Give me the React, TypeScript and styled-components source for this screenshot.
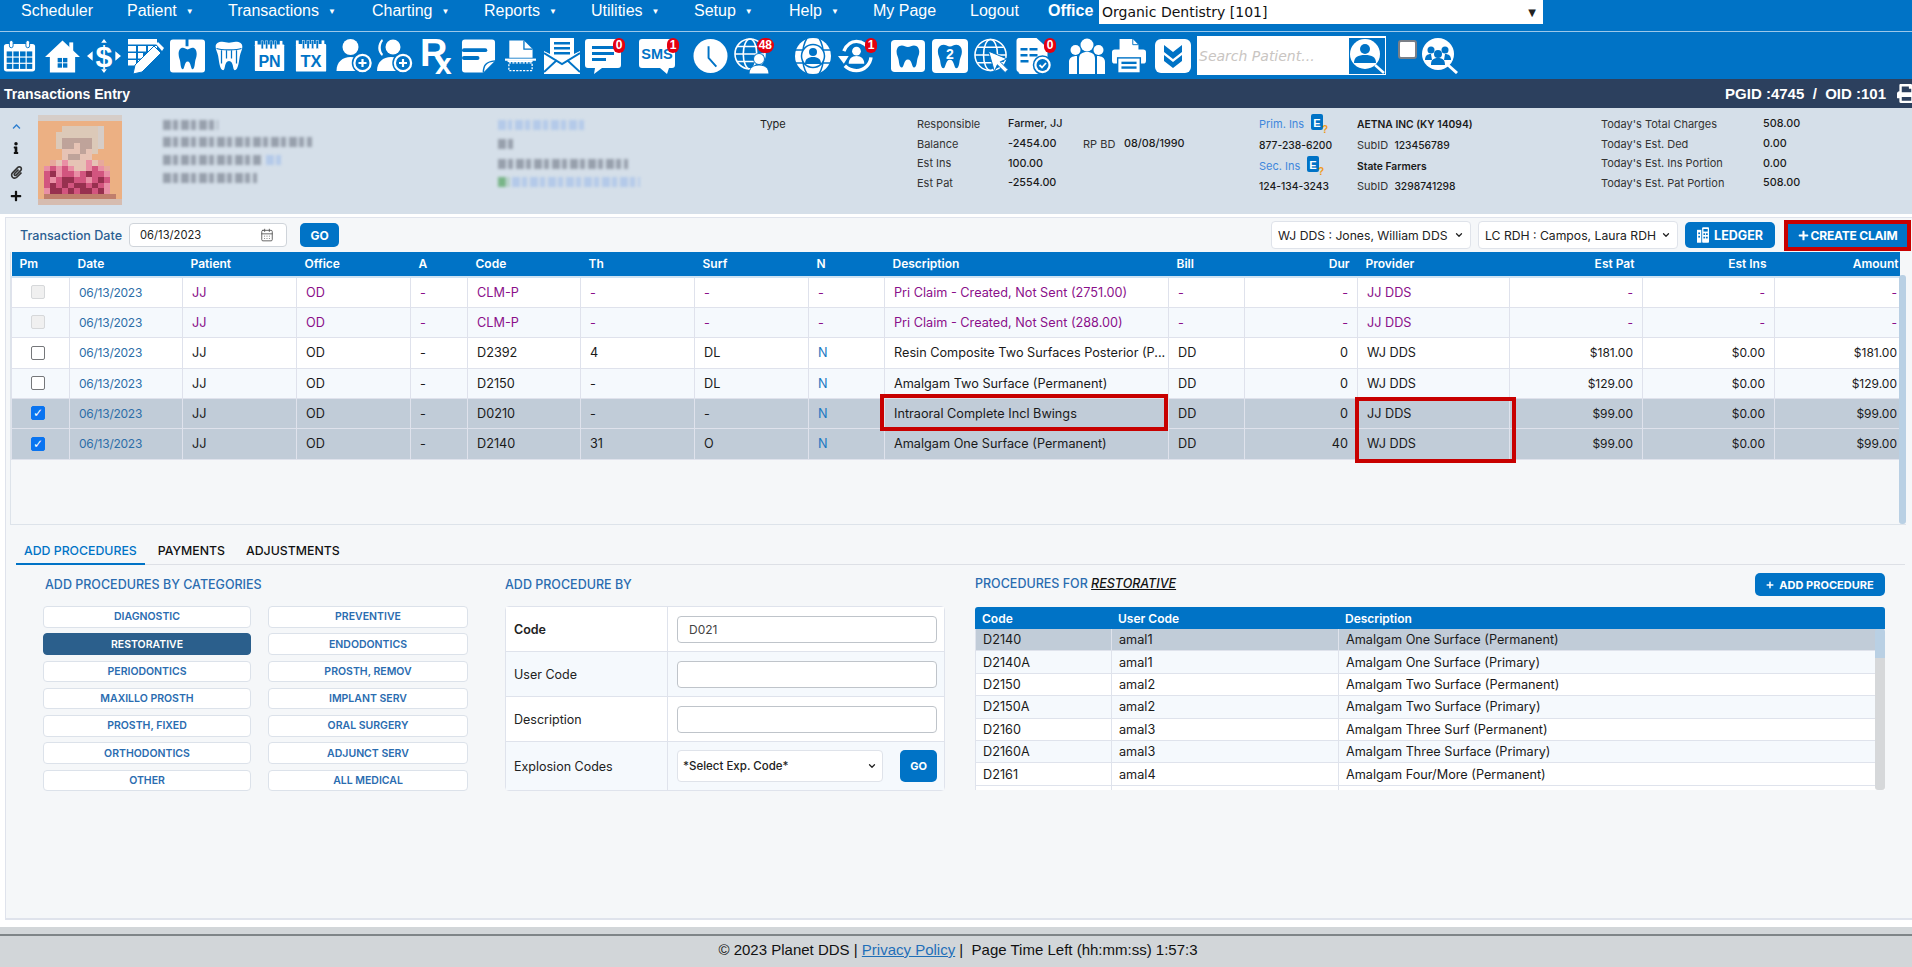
import React from "react";
import styled, { createGlobalStyle } from "styled-components";
import { FaChevronUp, FaInfo, FaPaperclip, FaPlus, FaPrint } from "react-icons/fa";
import { CalendarDays, ChevronDown } from "lucide-react";

const BLUE = "#0073c6";
const UI_FONT = `Inter, "Open Sans", sans-serif`;

const GlobalStyle = createGlobalStyle`
  html, body { margin: 0; padding: 0; background: #fff; }
  body { font-family: ${UI_FONT}; overflow: hidden; }
  * { box-sizing: border-box; }
`;

/* ---------- toolbar icons ---------- */

const Svg: React.FC<{ children: React.ReactNode }> = ({ children }) => (
  <svg viewBox="0 0 36 36" width="100%" height="36" fill="#fff">
    {children}
  </svg>
);

const TOOTH =
  "M18 6.5c-3 0-5-2-8-2C5.5 4.500 3 8 3 12.500c0 4.500 2.200 6.500 2.800 10.500.5 3.500 1.200 9 4 9 3.300 0 2.500-10 8.200-10s4.900 10 8.200 10c2.800 0 3.500-5.500 4-9 .6-4 2.800-6 2.800-10.500C33 8 30.500 4.500 26 4.500c-3 0-5 2-8 2z";

const Head = ({ x, y, r }: { x: number; y: number; r: number }) => <circle cx={x} cy={y} r={r} />;

const Calendar = () => (
  <Svg>
    <rect x="1" y="5" width="34" height="30" rx="3" />
    <rect x="7" y="1" width="4" height="8" rx="2" stroke={BLUE} />
    <rect x="25" y="1" width="4" height="8" rx="2" stroke={BLUE} />
    <g fill={BLUE}>
      {[0, 1, 2].map((r) =>
        [0, 1, 2, 3].map((c) => <rect key={`${r}${c}`} x={4 + c * 7.300} y={13 + r * 6.800} width="6" height="5.500" />)
      )}
    </g>
  </Svg>
);
const Home = () => (
  <Svg>
    <path d="M18 2 36 19h-5v16H5V19H0L18 2z" />
    <rect x="25" y="4" width="4" height="9" />
    <g fill={BLUE}>
      <rect x="13" y="20" width="4.500" height="4.500" />
      <rect x="18.500" y="20" width="4.500" height="4.500" />
      <rect x="13" y="25.500" width="4.500" height="4.500" />
      <rect x="18.500" y="25.500" width="4.500" height="4.500" />
    </g>
  </Svg>
);
const Dollar = () => (
  <Svg>
    <text x="18" y="29.500" fontSize="32" fontWeight="700" textAnchor="middle" fontFamily="Liberation Sans">$</text>
    <path d="M18 0l3 4h-6zM18 36l3-4h-6z" />
    <path d="M0 18l6-5v10zM36 18l-6-5v10z" />
  </Svg>
);
const ListPencil = () => (
  <Svg>
    {[1, 8, 15, 22].map((y, i) => (
      <g key={y}>
        <rect x="0" y={y} width={i === 0 ? 29 : 8} height="5.500" />
        {i > 0 && <rect x="10" y={y} width={i === 1 ? 8 : 5} height="5.500" />}
        {i === 1 && <rect x="20" y={y} width="9" height="5.500" />}
      </g>
    ))}
    <path d="M5 36l2-9L26 8l7 7-19 19-9 2z" stroke={BLUE} strokeWidth="1" />
    <path d="M28 6l2-2 6 6-2 3z" />
  </Svg>
);
const ToothTile = () => (
  <Svg>
    <rect x="0" y="1" width="36" height="34" rx="3" />
    <rect x="16" y="0" width="3" height="8" fill={BLUE} />
    <path transform="translate(7 6) scale(.62 .8)" d={TOOTH} fill={BLUE} />
  </Svg>
);
const Crown = () => (
  <Svg>
    <path d="M2 7c0-4 3-6 8-6 3 0 5 1 8 1s5-1 8-1c5 0 8 2 8 6 0 4-2 6-3 11-1 6-2 17-6 17-3 0-1-11-7-11s-4 11-7 11c-4 0-5-11-6-17-1-5-3-7-3-11z" />
    <g stroke={BLUE} strokeWidth="1.500">
      <path d="M9 11v16M15 11v10M21 11v10M27 11v16" fill="none" />
      <path d="M3 9c5 2 25 2 30 0" fill="none" />
    </g>
  </Svg>
);
const Pad = ({ label }: { label: string }) => (
  <Svg>
    <rect x="1" y="5" width="33" height="30" rx="1" />
    <g fill={BLUE}>
      {[8, 13, 18, 23].map((x) => (
        <rect key={x} x={x} y="1" width="2.500" height="9" stroke="#fff" strokeWidth=".5" />
      ))}
    </g>
    <rect x="1" y="1" width="3" height="6" />
    <rect x="29" y="1" width="3" height="6" />
    <text x="17.500" y="30" fontSize="18" fontWeight="700" textAnchor="middle" fill={BLUE} fontFamily="Liberation Sans">{label}</text>
  </Svg>
);
const PlusDisc = ({ cx = 26, cy = 25 }: { cx?: number; cy?: number }) => (
  <g>
    <circle cx={cx} cy={cy} r="10" stroke={BLUE} strokeWidth="1.500" />
    <circle cx={cx} cy={cy} r="7" fill={BLUE} />
    <path d={`M${cx - 4} ${cy}h8M${cx} ${cy - 4}v8`} stroke="#fff" strokeWidth="2.200" />
  </g>
);
const AddUser = () => (
  <Svg>
    <Head x={14} y={9} r={8} />
    <path d="M0 33c0-9 6-14 14-14s12 4 14 14z" />
    <PlusDisc />
  </Svg>
);
const AddUserAlt = () => (
  <Svg>
    <Head x={16} y={9} r={7.500} />
    <path d="M6 3C3 6 3 13 6 16l-1 2C0 14 0 6 5 1z" />
    <path d="M0 33c0-9 6-14 14-14s12 4 14 14z" />
    <PlusDisc />
  </Svg>
);
const Rx = () => (
  <svg viewBox="0 0 33 36" width="33" height="36" fill="#fff" overflow="visible">
    <text x="0" y="28" fontSize="38" fontWeight="700" fontFamily="Liberation Sans">R</text>
    <text x="15" y="36" fontSize="30" fontWeight="700" fontFamily="Liberation Sans">x</text>
  </svg>
);
const Note = () => (
  <Svg>
    <path d="M4 1h28c2 0 3 1 3 3v19L23 35H4c-2 0-3-1-3-3V4c0-2 1-3 3-3z" />
    <path d="M23 35c0-8 3-11 12-12" fill="none" stroke={BLUE} strokeWidth="1.500" />
    <rect x="1" y="10" width="26" height="4" rx="2" fill={BLUE} />
    <rect x="1" y="18" width="18" height="4" rx="2" fill={BLUE} />
  </Svg>
);
const FileScan = () => (
  <Svg>
    <path d="M5 0h17l10 10v10H5z" />
    <path d="M22 0v10h10" fill="none" stroke={BLUE} strokeWidth="1.500" />
    <rect x="0" y="21" width="36" height="2.500" />
    <rect x="3" y="23" width="29" height="2" />
    <rect x="4.500" y="26" width="27" height="9" fill="none" stroke="#fff" strokeWidth="1.500" strokeDasharray="2.500 1.500" />
  </Svg>
);
const Envelope = () => (
  <Svg>
    <path d="M6 0h24v16l6-3v23H0V13l6 3z" />
    <g fill={BLUE}>
      <rect x="10" y="4" width="16" height="2.500" />
      <rect x="10" y="9" width="16" height="2.500" />
      <rect x="10" y="14" width="16" height="2.500" />
    </g>
    <path d="M0 15l18 11 18-11M0 34l13-12M36 34 23 22" fill="none" stroke={BLUE} strokeWidth="2" />
  </Svg>
);
const Chat = () => (
  <Svg>
    <path d="M3 1h30c2 0 3 1 3 3v23c0 2-1 3-3 3H17L9 36l1-6H3c-2 0-3-1-3-3V4c0-2 1-3 3-3z" />
    <g fill={BLUE}>
      <rect x="7" y="8" width="22" height="3" />
      <rect x="7" y="14" width="22" height="3" />
      <rect x="7" y="20" width="14" height="3" />
    </g>
  </Svg>
);
const Sms = () => (
  <Svg>
    <path d="M3 1h30c2 0 3 1 3 3v23c0 2-1 3-3 3h-3l-2 6-7-6H3c-2 0-3-1-3-3V4c0-2 1-3 3-3z" />
    <text x="18" y="21" fontSize="14.500" fontWeight="700" textAnchor="middle" fill={BLUE} fontFamily="Liberation Sans">SMS</text>
  </Svg>
);
const Clock = () => (
  <Svg>
    <circle cx="18" cy="18" r="17.500" />
    <path d="M16 8v12l8 9" fill="none" stroke={BLUE} strokeWidth="2" />
  </Svg>
);
const GlobeLines = ({ r = 15, cx = 16, cy = 16 }: { r?: number; cx?: number; cy?: number }) => (
  <g fill="none" stroke="#fff" strokeWidth="1.600">
    <circle cx={cx} cy={cy} r={r} />
    <ellipse cx={cx} cy={cy} rx={r * 0.45} ry={r} />
    <path d={`M${cx - r} ${cy}h${2 * r}M${cx - r * 0.85} ${cy - r * 0.5}h${1.7 * r}M${cx - r * 0.85} ${cy + r * 0.5}h${1.7 * r}`} />
  </g>
);
const GlobeUser = () => (
  <Svg>
    <GlobeLines />
    <circle cx="25" cy="21" r="5.500" stroke={BLUE} />
    <path d="M15 36c0-6 4-9 10-9s10 3 10 9z" stroke={BLUE} />
  </Svg>
);
const GlobeBadgeUser = () => (
  <Svg>
    <circle cx="18" cy="18" r="18" />
    <path d="M0 12h36M0 25h36M12 0c-6 10-6 26 0 36M24 0c6 10 6 26 0 36" fill="none" stroke={BLUE} strokeWidth="1.500" />
    <circle cx="18" cy="18" r="11.500" stroke={BLUE} strokeWidth="1.500" />
    <circle cx="18" cy="14" r="4" fill={BLUE} />
    <path d="M10 26c0-5 3-7 8-7s8 2 8 7z" fill={BLUE} />
  </Svg>
);
const RefreshUser = () => (
  <Svg>
    <path d="M6 13C9 6 14 3 19 3c8 0 15 7 15 15s-7 15-15 15c-5 0-9-2-12-5" fill="none" stroke="#fff" strokeWidth="3.500" strokeDasharray="36 6" />
    <path d="M0 18h11l-5 8z" />
    <circle cx="19" cy="13" r="4.500" />
    <path d="M11 26c0-5 3-8 8-8s8 3 8 8z" />
  </Svg>
);
const ToothPlain = () => (
  <Svg>
    <rect x="0" y="1" width="36" height="34" rx="4" />
    <path transform="translate(3.500 3) scale(.8 .85)" d={TOOTH} fill={BLUE} />
  </Svg>
);
const ToothNumber = () => (
  <Svg>
    <rect x="0" y="1" width="36" height="34" rx="4" />
    <path transform="translate(3.500 3) scale(.8 .85)" d={TOOTH} fill={BLUE} />
    <text x="18" y="21" fontSize="14" fontWeight="700" textAnchor="middle" fontFamily="Liberation Sans">2</text>
  </Svg>
);
const GlobeCursor = () => (
  <Svg>
    <GlobeLines r={16} cx={17} cy={17} />
    <path d="M15 13l19 8-7 3 8 8-3 3-8-8-3 7z" stroke={BLUE} />
  </Svg>
);
const DocCheck = () => (
  <Svg>
    <path d="M3 0h18l11 10v14H3z" />
    <path d="M1 3c0-2 1-3 3-3h4v34H4c-2 0-3-1-3-3z" />
    <rect x="3" y="10" width="24" height="26" rx="2" />
    <g fill={BLUE}>
      <rect x="5" y="10" width="7" height="2.500" />
      <rect x="14" y="10" width="8" height="2.500" />
      <rect x="5" y="16" width="7" height="2.500" />
      <rect x="14" y="16" width="8" height="2.500" />
      <rect x="5" y="22" width="8" height="2.500" />
    </g>
    <circle cx="27" cy="27" r="9" stroke={BLUE} strokeWidth="1.500" />
    <circle cx="27" cy="27" r="6" fill={BLUE} />
    <path d="M24 27l2.500 2.500 4-4.500" fill="none" stroke="#fff" strokeWidth="1.800" />
  </Svg>
);
const People = () => (
  <Svg>
    <circle cx="18" cy="7" r="6.500" />
    <circle cx="6.500" cy="12" r="5" />
    <circle cx="29.500" cy="12" r="5" />
    <path d="M10 36V21c0-5 3-7 8-7s8 2 8 7v15z" />
    <path d="M0 36V24c0-4 3-6 8-6v18zM36 36V24c0-4-3-6-8-6v18z" />
  </Svg>
);
const Printer = () => (
  <Svg>
    <path d="M8 0h14l6 6v8H8z" />
    <path d="M22 0v6h6" fill="none" stroke={BLUE} />
    <rect x="0" y="11" width="36" height="15" rx="3" />
    <rect x="6" y="20" width="24" height="16" stroke={BLUE} strokeWidth="1.500" />
    <rect x="10" y="24" width="16" height="2.500" fill={BLUE} />
    <rect x="10" y="29" width="16" height="2.500" fill={BLUE} />
  </Svg>
);
const Chevrons = () => (
  <Svg>
    <rect x="0" y="1" width="36" height="34" rx="6" />
    <path d="M9 7l9 7 9-7v7l-9 7-9-7zM9 17l9 7 9-7v6l-9 7-9-7z" fill={BLUE} />
  </Svg>
);
const SearchUser = () => (
  <svg viewBox="0 0 36 36" width="36" height="36" fill="#fff">
    <rect width="36" height="36" fill={BLUE} />
    <circle cx="16" cy="16" r="15" />
    <circle cx="16" cy="11" r="5" fill={BLUE} />
    <path d="M5 25c0-6 4-8 11-8s11 2 11 8z" fill={BLUE} />
    <path d="M26 27l9 8" stroke="#fff" strokeWidth="2.500" />
  </svg>
);
const SearchPeople = () => (
  <svg viewBox="0 0 36 36" width="36" height="36" fill="#fff">
    <circle cx="16" cy="16" r="16" />
    <g fill={BLUE}>
      <circle cx="9" cy="12" r="3.500" />
      <circle cx="23" cy="12" r="3.500" />
      <circle cx="16" cy="16" r="4" />
      <path d="M3 22c0-4 2-6 6-6l1 6zM29 22c0-4-2-6-6-6l-1 6zM9 27c0-5 2-7 7-7s7 2 7 7z" />
    </g>
    <path d="M26 27l9 8" stroke="#fff" strokeWidth="3" />
  </svg>
);
const LedgerIcon = () => (
  <svg viewBox="0 0 14 18" width="12" height="16" fill="#fff">
    <rect x="0" y="3" width="5" height="15" />
    <rect x="6" y="0" width="8" height="18" rx="1" />
    <g fill={BLUE}>
      <rect x="7.500" y="2" width="5" height="3" />
      <rect x="7.500" y="7" width="2" height="2" />
      <rect x="10.500" y="7" width="2" height="2" />
      <rect x="7.500" y="11" width="2" height="2" />
      <rect x="10.500" y="11" width="2" height="2" />
      <rect x="1.500" y="6" width="2" height="2" />
      <rect x="1.500" y="10" width="2" height="2" />
    </g>
  </svg>
);
const InsIcon = () => (
  <svg viewBox="0 0 18 20" width="18" height="20">
    <rect x="0" y="0" width="12" height="16" rx="2" fill={BLUE} />
    <text x="6" y="12.500" fontSize="11" fontWeight="700" fill="#fff" textAnchor="middle" fontFamily="Liberation Sans">E</text>
    <text x="14" y="19" fontSize="10" fontWeight="700" fill="#f09a1a" textAnchor="middle" fontFamily="Liberation Sans">?</text>
  </svg>
);

/* pixelated patient photo */
const PHOTO_ROWS = [
  "gggggggggggggg",
  "oooooooooooooo",
  "oooollllllgooo",
  "ooolllllllgooo",
  "oooldddddlgooo",
  "ooolddfddlgooo",
  "oooofffdfloooo",
  "oooofddffooooo",
  "oosfpfffpfsooo",
  "opmpmpffpmpsoo",
  "omrpmmpmrmmpoo",
  "ompmrrmmpmrmoo",
  "omrmrmrrmrmpoo",
  "oprrmrmrrmrpoo",
  "obbbbbbbbbbbbo",
  "nnnnnnnnnnnnnn",
];
const PHOTO_COLORS: Record<string, string> = {
  g: "#d6cdc8", o: "#ecb083", l: "#dcc9b8", f: "#e6c3b5", d: "#bfa39a", s: "#e8a89c",
  p: "#e98fa5", m: "#d2557f", r: "#97304f", b: "#c07e6c", n: "#d6bcb0",
};
const Photo = () => (
  <svg viewBox="0 0 14 16" width="84" height="90" preserveAspectRatio="none" shapeRendering="crispEdges">
    {PHOTO_ROWS.map((row, y) =>
      row.split("").map((c, x) => <rect key={`${x}-${y}`} x={x} y={y} width="1.050" height="1.050" fill={PHOTO_COLORS[c]} />)
    )}
  </svg>
);

/* ---------- data ---------- */

const NAV = [
  { label: "Scheduler", w: 106 },
  { label: "Patient", w: 101, caret: true },
  { label: "Transactions", w: 144, caret: true },
  { label: "Charting", w: 112, caret: true },
  { label: "Reports", w: 107, caret: true },
  { label: "Utilities", w: 103, caret: true },
  { label: "Setup", w: 95, caret: true },
  { label: "Help", w: 84, caret: true },
  { label: "My Page", w: 97 },
  { label: "Logout", w: 78 },
];

const TOOLS: { x: number; w: number; Icon: React.FC; badge?: string }[] = [
  { x: 3, w: 33, Icon: Calendar },
  { x: 45, w: 35, Icon: Home },
  { x: 87, w: 34, Icon: Dollar },
  { x: 128, w: 36, Icon: ListPencil },
  { x: 170, w: 35, Icon: ToothTile },
  { x: 214, w: 30, Icon: Crown },
  { x: 254, w: 32, Icon: () => <Pad label="PN" /> },
  { x: 295, w: 33, Icon: () => <Pad label="TX" /> },
  { x: 336, w: 37, Icon: AddUser },
  { x: 377, w: 36, Icon: AddUserAlt },
  { x: 420, w: 33, Icon: Rx },
  { x: 461, w: 35, Icon: Note },
  { x: 505, w: 31, Icon: FileScan },
  { x: 544, w: 36, Icon: Envelope },
  { x: 585, w: 36, Icon: Chat, badge: "0" },
  { x: 639, w: 36, Icon: Sms, badge: "1" },
  { x: 693, w: 35, Icon: Clock },
  { x: 734, w: 36, Icon: GlobeUser, badge: "48" },
  { x: 795, w: 36, Icon: GlobeBadgeUser },
  { x: 838, w: 35, Icon: RefreshUser, badge: "1" },
  { x: 891, w: 34, Icon: ToothPlain },
  { x: 932, w: 36, Icon: ToothNumber },
  { x: 974, w: 35, Icon: GlobeCursor },
  { x: 1015, w: 37, Icon: DocCheck, badge: "0" },
  { x: 1069, w: 36, Icon: People },
  { x: 1112, w: 34, Icon: Printer },
  { x: 1155, w: 36, Icon: Chevrons },
];

const COL_WIDTHS = [58, 113, 114, 114, 57, 113, 114, 114, 76, 284, 76, 113, 152, 133, 132, 125];
const HEADERS = ["Pm", "Date", "Patient", "Office", "A", "Code", "Th", "Surf", "N", "Description", "Bill", "Dur", "Provider", "Est Pat", "Est Ins", "Amount"];
const RIGHT_COLS = new Set([11, 13, 14, 15]);
const ROW_HEIGHTS = [30, 30, 31, 30, 30, 31];

type Row = { code: string; th: string; surf: string; n: string; desc: string; bill: string; dur: string; prov: string; pat: string; ins: string; amt: string; claim?: boolean; selected?: boolean };

const ROWS: Row[] = [
  { code: "CLM-P", th: "-", surf: "-", n: "-", desc: "Pri Claim - Created, Not Sent (2751.00)", bill: "-", dur: "-", prov: "JJ DDS", pat: "-", ins: "-", amt: "-", claim: true },
  { code: "CLM-P", th: "-", surf: "-", n: "-", desc: "Pri Claim - Created, Not Sent (288.00)", bill: "-", dur: "-", prov: "JJ DDS", pat: "-", ins: "-", amt: "-", claim: true },
  { code: "D2392", th: "4", surf: "DL", n: "N", desc: "Resin Composite Two Surfaces Posterior (P...", bill: "DD", dur: "0", prov: "WJ DDS", pat: "$181.00", ins: "$0.00", amt: "$181.00" },
  { code: "D2150", th: "-", surf: "DL", n: "N", desc: "Amalgam Two Surface (Permanent)", bill: "DD", dur: "0", prov: "WJ DDS", pat: "$129.00", ins: "$0.00", amt: "$129.00" },
  { code: "D0210", th: "-", surf: "-", n: "N", desc: "Intraoral Complete Incl Bwings", bill: "DD", dur: "0", prov: "JJ DDS", pat: "$99.00", ins: "$0.00", amt: "$99.00", selected: true },
  { code: "D2140", th: "31", surf: "O", n: "N", desc: "Amalgam One Surface (Permanent)", bill: "DD", dur: "40", prov: "WJ DDS", pat: "$99.00", ins: "$0.00", amt: "$99.00", selected: true },
];

const CATEGORIES = [
  ["DIAGNOSTIC", "PREVENTIVE"],
  ["RESTORATIVE", "ENDODONTICS"],
  ["PERIODONTICS", "PROSTH, REMOV"],
  ["MAXILLO PROSTH", "IMPLANT SERV"],
  ["PROSTH, FIXED", "ORAL SURGERY"],
  ["ORTHODONTICS", "ADJUNCT SERV"],
  ["OTHER", "ALL MEDICAL"],
];

const PROCEDURES = [
  ["D2140", "amal1", "Amalgam One Surface (Permanent)"],
  ["D2140A", "amal1", "Amalgam One Surface (Primary)"],
  ["D2150", "amal2", "Amalgam Two Surface (Permanent)"],
  ["D2150A", "amal2", "Amalgam Two Surface (Primary)"],
  ["D2160", "amal3", "Amalgam Three Surf (Permanent)"],
  ["D2160A", "amal3", "Amalgam Three Surface (Primary)"],
  ["D2161", "amal4", "Amalgam Four/More (Permanent)"],
];

/* ---------- component ---------- */

const App: React.FC = () => {
  return (
    <Page>
      <GlobalStyle />
      <Nav>
        {NAV.map((n) => (
          <NavItem key={n.label} $w={n.w}>
            {n.label}
            {n.caret && <Caret>▼</Caret>}
          </NavItem>
        ))}
        <OfficeLabel>Office</OfficeLabel>
        <OfficeSelect>
          Organic Dentistry [101]
          <OfficeCaret>▼</OfficeCaret>
        </OfficeSelect>
      </Nav>

      <Toolbar>
        {TOOLS.map((t, i) => {
          const prev = i === 0 ? 0 : TOOLS[i - 1].x + TOOLS[i - 1].w;
          return (
            <ToolIcon key={t.x} $w={t.w} $gap={t.x - prev}>
              <t.Icon />
              {t.badge && <Badge>{t.badge}</Badge>}
            </ToolIcon>
          );
        })}
        <SearchBox>
          <SearchText>Search Patient...</SearchText>
          <SearchUser />
        </SearchBox>
        <ToolCheck />
        <SearchPeopleWrap>
          <SearchPeople />
        </SearchPeopleWrap>
      </Toolbar>

      <TitleBar>
        <span>Transactions Entry</span>
        <TitleRight>
          <span>PGID :4745 &nbsp;/&nbsp; OID :101</span>
          <FaPrint size={19} />
        </TitleRight>
      </TitleBar>

      <PatientPanel>
        <Rail>
          <FaChevronUp size={9} color="#2f7fd0" />
          <FaInfo size={12} color="#111" />
          <FaPaperclip size={13} color="#333" />
          <FaPlus size={12} color="#111" />
        </Rail>
        <PhotoWrap>
          <Photo />
        </PhotoWrap>
        <BlurColumn $w={335}>
          <BlurRow $h={19}><Smudge $w={55} /></BlurRow>
          <BlurRow $h={16}><Smudge $w={149} /></BlurRow>
          <BlurRow $h={20}><Smudge $w={100} /><Smudge $w={18} $c="#a9c3ea" /></BlurRow>
          <BlurRow $h={16}><Smudge $w={94} /></BlurRow>
        </BlurColumn>
        <BlurColumn $w={262}>
          <BlurRow $h={19}><Smudge $w={14} $c="#a9c3ea" /><Smudge $w={70} $c="#a9c3ea" /></BlurRow>
          <BlurRow $h={20}><Smudge $w={15} /></BlurRow>
          <BlurRow $h={19}><Smudge $w={130} /></BlurRow>
          <BlurRow $h={17}><Smudge $w={11} $c="#5aa768" /><Smudge $w={128} $c="#a9c3ea" /></BlurRow>
        </BlurColumn>
        <TypeColumn>Type</TypeColumn>
        <InfoGrid $cols="91px 75px 41px 135px">
          <InfoLabel>Responsible</InfoLabel>
          <InfoValue $span={3}>Farmer, JJ</InfoValue>
          <InfoLabel>Balance</InfoLabel>
          <InfoValue>-2454.00</InfoValue>
          <InfoLabel>RP BD</InfoLabel>
          <InfoValue>08/08/1990</InfoValue>
          <InfoLabel>Est Ins</InfoLabel>
          <InfoValue $span={3}>100.00</InfoValue>
          <InfoLabel>Est Pat</InfoLabel>
          <InfoValue $span={3}>-2554.00</InfoValue>
        </InfoGrid>
        <InsGrid>
          <InsLabel>Prim. Ins <InsIcon /></InsLabel>
          <InfoValue $bold>AETNA INC (KY 14094)</InfoValue>
          <PhoneValue>877-238-6200</PhoneValue>
          <InfoLabel>SubID &nbsp;<PhoneValue>123456789</PhoneValue></InfoLabel>
          <InsLabel>Sec. Ins <InsIcon /></InsLabel>
          <InfoValue $bold>State Farmers</InfoValue>
          <PhoneValue>124-134-3243</PhoneValue>
          <InfoLabel>SubID &nbsp;<PhoneValue>3298741298</PhoneValue></InfoLabel>
        </InsGrid>
        <InfoGrid $cols="162px 100px">
          <InfoLabel>Today's Total Charges</InfoLabel>
          <InfoValue>508.00</InfoValue>
          <InfoLabel>Today's Est. Ded</InfoLabel>
          <InfoValue>0.00</InfoValue>
          <InfoLabel>Today's Est. Ins Portion</InfoLabel>
          <InfoValue>0.00</InfoValue>
          <InfoLabel>Today's Est. Pat Portion</InfoLabel>
          <InfoValue>508.00</InfoValue>
        </InfoGrid>
      </PatientPanel>

      <MainPanel>
        <FilterBar>
          <DateLabel>Transaction Date</DateLabel>
          <DateInput>
            06/13/2023
            <CalendarDays size={14} color="#555" strokeWidth={1.5} />
          </DateInput>
          <SolidButton $w={39} $h={24} $size={12}>GO</SolidButton>
          <FilterSpacer />
          <ProviderSelect>
            WJ DDS : Jones, William DDS <ChevronDown size={10} color="#222" strokeWidth={3} />
          </ProviderSelect>
          <ProviderSelect>
            LC RDH : Campos, Laura RDH <ChevronDown size={10} color="#222" strokeWidth={3} />
          </ProviderSelect>
          <SolidButton $w={90} $h={26} $size={12.500}><LedgerIcon /> LEDGER</SolidButton>
          <CreateClaim><FaPlus size={11} /> CREATE CLAIM</CreateClaim>
        </FilterBar>

        <GridWrap>
          <GridInner>
            <TxTable>
              <colgroup>
                {COL_WIDTHS.map((w, i) => (
                  <col key={i} style={{ width: w }} />
                ))}
              </colgroup>
              <thead>
                <tr>
                  {HEADERS.map((h, i) => (
                    <TxHead key={h} $right={RIGHT_COLS.has(i)}>{h}</TxHead>
                  ))}
                </tr>
              </thead>
              <tbody>
                {ROWS.map((r, i) => (
                  <TxRow key={i} $h={ROW_HEIGHTS[i]} $alt={i % 2 === 1} $selected={r.selected} $claim={r.claim}>
                    <TxCell>
                      <RowCheck $checked={r.selected} $disabled={r.claim}>{r.selected ? "✓" : ""}</RowCheck>
                    </TxCell>
                    <TxCell $link $num>06/13/2023</TxCell>
                    <TxCell>JJ</TxCell>
                    <TxCell>OD</TxCell>
                    <TxCell>-</TxCell>
                    <TxCell>{r.code}</TxCell>
                    <TxCell>{r.th}</TxCell>
                    <TxCell>{r.surf}</TxCell>
                    <TxCell $note={r.n === "N"}>{r.n}</TxCell>
                    <DescCell>{r.desc}</DescCell>
                    <TxCell>{r.bill}</TxCell>
                    <TxCell $right>{r.dur}</TxCell>
                    <TxCell>{r.prov}</TxCell>
                    <TxCell $right $num>{r.pat}</TxCell>
                    <TxCell $right $num>{r.ins}</TxCell>
                    <TxCell $right $num>{r.amt}</TxCell>
                  </TxRow>
                ))}
              </tbody>
            </TxTable>
          </GridInner>
          <GridScroll />
        </GridWrap>

        <Tabs>
          <Tab $active>ADD PROCEDURES</Tab>
          <Tab>PAYMENTS</Tab>
          <Tab>ADJUSTMENTS</Tab>
        </Tabs>

        <Lower>
          <CategoryColumn>
            <SectionTitle $indent={1}>ADD PROCEDURES BY CATEGORIES</SectionTitle>
            <CategoryGrid>
              {CATEGORIES.flat().map((c) => (
                <CategoryButton key={c} $active={c === "RESTORATIVE"}>{c}</CategoryButton>
              ))}
            </CategoryGrid>
          </CategoryColumn>

          <FormColumn>
            <SectionTitle>ADD PROCEDURE BY</SectionTitle>
            <FormBox>
              <FormRow $h={45}>
                <FormLabel $bold>Code</FormLabel>
                <FormField><TextInput>D021</TextInput></FormField>
              </FormRow>
              <FormRow $h={45} $alt>
                <FormLabel>User Code</FormLabel>
                <FormField><TextInput /></FormField>
              </FormRow>
              <FormRow $h={45}>
                <FormLabel>Description</FormLabel>
                <FormField><TextInput /></FormField>
              </FormRow>
              <FormRow $h={48} $alt>
                <FormLabel>Explosion Codes</FormLabel>
                <FormField>
                  <ExpSelect>
                    *Select Exp. Code* <ChevronDown size={10} color="#222" strokeWidth={3} />
                  </ExpSelect>
                  <SolidButton $w={37} $h={32} $size={11}>GO</SolidButton>
                </FormField>
              </FormRow>
            </FormBox>
          </FormColumn>

          <ProcColumn>
            <ProcHead>
              <SectionTitle>
                PROCEDURES FOR <ProcName>RESTORATIVE</ProcName>
              </SectionTitle>
              <SolidButton $w={130} $h={23} $size={11}><FaPlus size={8} /> ADD PROCEDURE</SolidButton>
            </ProcHead>
            <ProcBox>
              <ProcHeader>
                <ProcCol $w={136}>Code</ProcCol>
                <ProcCol $w={227}>User Code</ProcCol>
                <ProcCol>Description</ProcCol>
              </ProcHeader>
              <ProcBody>
                {PROCEDURES.map((p, i) => (
                  <ProcRow key={p[0]} $alt={i % 2 === 1} $selected={i === 0}>
                    <ProcCell $w={136}>{p[0]}</ProcCell>
                    <ProcCell $w={227}>{p[1]}</ProcCell>
                    <ProcCell>{p[2]}</ProcCell>
                  </ProcRow>
                ))}
                <ProcTail>
                  <ProcCell $w={136} />
                  <ProcCell $w={227} />
                </ProcTail>
                <ProcScroll />
              </ProcBody>
            </ProcBox>
          </ProcColumn>
        </Lower>
      </MainPanel>

      <FooterGap />
      <Footer>
        © 2023 Planet DDS | <FooterLink>Privacy Policy</FooterLink> | &nbsp;Page Time Left (hh:mm:ss) 1:57:3
      </Footer>

      <RedBox $x={1784} $y={220} $w={127} $h={31} />
      <RedBox $x={880} $y={394} $w={288} $h={37} />
      <RedBox $x={1355} $y={397} $w={161} $h={66} />
    </Page>
  );
};

const Page = styled.div`
  position: relative;
  width: 1912px;
  height: 967px;
  display: flex;
  flex-direction: column;
  overflow: hidden;
`;

const Nav = styled.div`
  display: flex;
  align-items: flex-start;
  height: 32px;
  padding-left: 21px;
  background: ${BLUE};
  border-bottom: 1px solid #9cc8ea;
`;

const NavItem = styled.div<{ $w: number }>`
  width: ${(p) => p.$w}px;
  height: 20px;
  line-height: 21px;
  font-family: "Liberation Sans", Arial, sans-serif;
  font-size: 16px;
  color: #fff;
  white-space: nowrap;
`;

const Caret = styled.span`
  margin-left: 9px;
  font-size: 8px;
  vertical-align: 2px;
`;

const OfficeLabel = styled.div`
  width: 51px;
  line-height: 21px;
  font-family: "Liberation Sans", Arial, sans-serif;
  font-size: 16px;
  font-weight: 700;
  color: #fff;
`;

const OfficeSelect = styled.div`
  display: flex;
  align-items: center;
  justify-content: space-between;
  width: 444px;
  height: 24px;
  padding: 0 7px 0 3px;
  background: #fff;
  color: #111;
  font-family: "DejaVu Sans", sans-serif;
  font-size: 14px;
`;

const OfficeCaret = styled.span`
  font-size: 10px;
  color: #222;
`;

const Toolbar = styled.div`
  display: flex;
  align-items: center;
  height: 47px;
  background: ${BLUE};
`;

const ToolIcon = styled.div<{ $w: number; $gap: number }>`
  position: relative;
  flex: none;
  width: ${(p) => p.$w}px;
  height: 36px;
  margin-left: ${(p) => p.$gap}px;
`;

const Badge = styled.span`
  position: absolute;
  top: 0;
  right: -4px;
  min-width: 12px;
  height: 15px;
  padding: 0 2px;
  border-radius: 8px;
  background: #e5000f;
  color: #fff;
  font-family: "Liberation Sans", sans-serif;
  font-size: 12px;
  font-weight: 700;
  line-height: 15px;
  text-align: center;
`;

const SearchBox = styled.div`
  display: flex;
  align-items: center;
  justify-content: space-between;
  flex: none;
  width: 189px;
  height: 39px;
  margin-left: 6px;
  padding: 0 1px 0 2px;
  background: #fff;
`;

const SearchText = styled.span`
  font-family: "DejaVu Sans", sans-serif;
  font-size: 14px;
  font-style: italic;
  color: #c9c5c2;
`;

const ToolCheck = styled.span`
  flex: none;
  width: 19px;
  height: 19px;
  margin: -13px 0 0 12px;
  background: #fff;
  border: 2px solid #7b7f86;
  border-radius: 3px;
`;

const SearchPeopleWrap = styled.div`
  flex: none;
  width: 36px;
  height: 36px;
  margin-left: 5px;
`;

const TitleBar = styled.div`
  display: flex;
  align-items: center;
  justify-content: space-between;
  height: 29px;
  padding: 0 0 0 4px;
  background: #2c405e;
  color: #fff;
  font-family: "Liberation Sans", Arial, sans-serif;
  font-size: 14px;
  font-weight: 700;
`;

const TitleRight = styled.span`
  display: flex;
  align-items: center;
  gap: 11px;
  margin-right: -4px;
  font-size: 15px;
`;

const PatientPanel = styled.div`
  display: flex;
  height: 106px;
  background: #d5dfe9;
`;

const Rail = styled.div`
  display: flex;
  flex-direction: column;
  align-items: center;
  justify-content: space-between;
  flex: none;
  width: 32px;
  height: 80px;
  margin-top: 14px;
`;

const PhotoWrap = styled.div`
  flex: none;
  width: 131px;
  padding: 7px 0 0 6px;
  filter: blur(0.6px);
`;

const BlurColumn = styled.div<{ $w: number }>`
  flex: none;
  width: ${(p) => p.$w}px;
  padding-top: 7px;
`;

const BlurRow = styled.div<{ $h: number }>`
  display: flex;
  align-items: center;
  gap: 3px;
  height: ${(p) => p.$h}px;
`;

const Smudge = styled.span<{ $w: number; $c?: string }>`
  display: block;
  width: ${(p) => p.$w}px;
  height: 10px;
  background: repeating-linear-gradient(
    90deg,
    ${(p) => p.$c ?? "#838b98"} 0 8px,
    transparent 8px 10px,
    ${(p) => p.$c ?? "#838b98"} 10px 15px,
    transparent 15px 18px
  );
  opacity: 0.75;
  filter: blur(1.400px);
`;

const TypeColumn = styled.div`
  flex: none;
  width: 157px;
  padding-top: 9px;
  font-size: 11px;
  color: #222;
`;

const InfoGrid = styled.div<{ $cols: string }>`
  flex: none;
  display: grid;
  grid-template-columns: ${(p) => p.$cols};
  grid-auto-rows: 19.7px;
  align-items: center;
  padding-top: 6px;
  font-size: 11px;
`;

const InfoLabel = styled.div`
  color: #333;
  white-space: nowrap;
`;

const InfoValue = styled.span<{ $span?: number; $bold?: boolean }>`
  grid-column: span ${(p) => p.$span ?? 1};
  color: #1a1a1a;
  font-size: ${(p) => (p.$bold ? "10.300px" : "10.800px")};
  font-weight: ${(p) => (p.$bold ? 600 : 500)};
  white-space: nowrap;
`;

const PhoneValue = styled.span`
  color: #1a1a1a;
  font-size: 10.300px;
  font-weight: 500;
  white-space: nowrap;
`;

const InsGrid = styled.div`
  flex: none;
  display: grid;
  grid-template-columns: 98px 244px;
  grid-auto-rows: 20.700px;
  align-items: center;
  padding-top: 6px;
  font-size: 11px;
  color: #1a1a1a;
  white-space: nowrap;
`;

const InsLabel = styled.div`
  display: flex;
  align-items: center;
  gap: 7px;
  color: #3f87dc;
`;

const MainPanel = styled.div`
  flex: 1;
  margin: 3px 0 0 5px;
  background: #f5f7f9;
  border-left: 1px solid #dfe3ec;
  border-top: 1px solid #dfe3ec;
  border-bottom: 2px solid #dfe3ec;
`;

const FilterBar = styled.div`
  display: flex;
  align-items: center;
  gap: 13px;
  height: 34px;
  padding: 0 5px 0 14px;
`;

const DateLabel = styled.span`
  font-size: 12.600px;
  font-weight: 500;
  color: #2c5f92;
  margin-right: -6px;
`;

const DateInput = styled.div`
  display: flex;
  align-items: center;
  justify-content: space-between;
  width: 158px;
  height: 24px;
  padding: 0 12px 0 10px;
  background: #fff;
  border: 1px solid #cfd4da;
  border-radius: 4px;
  font-size: 11.200px;
  color: #222;
`;

const SolidButton = styled.button<{ $w: number; $h: number; $size: number }>`
  display: flex;
  align-items: center;
  justify-content: center;
  gap: 5px;
  flex: none;
  width: ${(p) => p.$w}px;
  height: ${(p) => p.$h}px;
  padding: 0;
  background: ${BLUE};
  border: 0;
  border-radius: 5px;
  color: #fff;
  font-family: ${UI_FONT};
  font-size: ${(p) => p.$size}px;
  font-weight: 700;
`;

const FilterSpacer = styled.div`
  flex: 1;
`;

const ProviderSelect = styled.div`
  display: flex;
  align-items: center;
  justify-content: space-between;
  width: 200px;
  height: 28px;
  margin-right: -6px;
  padding: 0 6px;
  background: #fff;
  border: 1px solid #dfe3ea;
  border-radius: 4px;
  font-size: 12.200px;
  color: #222;
  white-space: nowrap;
`;

const CreateClaim = styled.button`
  display: flex;
  align-items: center;
  justify-content: center;
  gap: 2px;
  flex: none;
  width: 119px;
  height: 23px;
  padding: 0;
  background: ${BLUE};
  border: 0;
  color: #fff;
  font-family: ${UI_FONT};
  font-size: 12px;
  font-weight: 700;
  letter-spacing: -0.2px;
  white-space: nowrap;
`;

const GridWrap = styled.div`
  display: flex;
  width: 1896px;
  height: 273px;
  margin-left: 4px;
  border-bottom: 1px solid #dde3ea;
  border-left: 1px solid #dde3ea;
`;

const GridInner = styled.div`
  flex: none;
  width: 1888px;
`;

const GridScroll = styled.div`
  flex: none;
  width: 7px;
  margin-top: 23px;
  background: #b9d0e4;
  border-radius: 3px;
`;

const TxTable = styled.table`
  width: 1888px;
  table-layout: fixed;
  border-collapse: collapse;
`;

const TxHead = styled.th<{ $right?: boolean }>`
  height: 25px;
  padding: 0 8px 2px;
  background: ${BLUE};
  border-bottom: 2px solid #cfe3f3;
  color: #fff;
  font-size: 12px;
  font-weight: 600;
  text-align: ${(p) => (p.$right ? "right" : "left")};
  &:last-child { padding-right: 1px; }
`;

const TxCell = styled.td<{ $right?: boolean; $link?: boolean; $note?: boolean; $num?: boolean }>`
  padding: 0 9px;
  border: 1px solid #dfe2ec;
  border-top: 0;
  font-size: ${(p) => (p.$num ? "12px" : "12.700px")};
  letter-spacing: ${(p) => (p.$link ? "-0.25px" : "0")};
  text-align: ${(p) => (p.$right ? "right" : "left")};
  white-space: nowrap;
  ${(p) => p.$link && "color: #2d6ea8 !important;"}
  ${(p) => p.$note && "color: #1a78c2 !important;"}
  &:last-child { padding-right: 2px; }
`;

const DescCell = styled(TxCell)`
  padding-right: 2px;
`;

const TxRow = styled.tr<{ $h: number; $alt?: boolean; $selected?: boolean; $claim?: boolean }>`
  height: ${(p) => p.$h}px;
  background: ${(p) => (p.$selected ? "#c1ccd8" : p.$alt ? "#f5f9fd" : "#fff")};
  color: ${(p) => (p.$claim ? "#8a0f8a" : "#1a1a1a")};
`;

const RowCheck = styled.span<{ $checked?: boolean; $disabled?: boolean }>`
  display: block;
  width: 14px;
  height: 14px;
  margin-left: 10px;
  border-radius: 2px;
  border: 1px solid ${(p) => (p.$checked ? "#0a74f0" : p.$disabled ? "#d6d8da" : "#75777a")};
  background: ${(p) => (p.$checked ? "#0a74f0" : p.$disabled ? "#f0f0f0" : "#fff")};
  color: #fff;
  font-family: "DejaVu Sans", sans-serif;
  font-size: 12px;
  font-weight: 700;
  line-height: 12px;
  text-align: center;
`;

const Tabs = styled.div`
  display: flex;
  align-items: flex-end;
  height: 40px;
  margin: 0 7px 0 10px;
  border-bottom: 1px solid #dde0e6;
`;

const Tab = styled.div<{ $active?: boolean }>`
  height: 24px;
  line-height: 20px;
  margin: 0 5px -1px 0;
  padding: 0 8px;
  border-bottom: ${(p) => (p.$active ? `2px solid ${BLUE}` : "2px solid transparent")};
  color: ${(p) => (p.$active ? BLUE : "#111")};
  font-size: 12.300px;
  font-weight: 500;
`;

const Lower = styled.div`
  display: flex;
  padding: 9px 0 0 38px;
`;

const CategoryColumn = styled.div`
  flex: none;
  width: 461px;
`;

const SectionTitle = styled.div<{ $indent?: number }>`
  height: 22px;
  line-height: 22px;
  margin-left: ${(p) => p.$indent ?? 0}px;
  color: #2a6cb0;
  font-size: 12.500px;
  font-weight: 500;
  white-space: nowrap;
`;

const CategoryGrid = styled.div`
  display: grid;
  grid-template-columns: 208px 200px;
  grid-auto-rows: 21.500px;
  column-gap: 17px;
  row-gap: 5.800px;
  margin: 10px 0 0 -1px;
`;

const CategoryButton = styled.div<{ $active?: boolean }>`
  display: flex;
  align-items: center;
  justify-content: center;
  background: ${(p) => (p.$active ? "#2b5f8c" : "#fff")};
  border: 1px solid ${(p) => (p.$active ? "#2b5f8c" : "#dce2ea")};
  border-radius: 4px;
  color: ${(p) => (p.$active ? "#fff" : "#2a6cb0")};
  font-size: 10.500px;
  font-weight: 600;
`;

const FormColumn = styled.div`
  flex: none;
  width: 470px;
`;

const FormBox = styled.div`
  width: 440px;
  margin-top: 10px;
  background: #fff;
  border: 1px solid #dfe3ec;
  border-radius: 4px;
`;

const FormRow = styled.div<{ $h: number; $alt?: boolean }>`
  display: flex;
  height: ${(p) => p.$h}px;
  background: ${(p) => (p.$alt ? "#f5f9fd" : "#fff")};
  border-bottom: 1px solid #dfe3ec;
  &:last-child { border-bottom: 0; }
`;

const FormLabel = styled.div<{ $bold?: boolean }>`
  display: flex;
  align-items: center;
  flex: none;
  width: 162px;
  padding-left: 8px;
  border-right: 1px solid #dfe3ec;
  color: #222;
  font-size: 12.500px;
  font-weight: ${(p) => (p.$bold ? 600 : 400)};
`;

const FormField = styled.div`
  display: flex;
  align-items: center;
  justify-content: space-between;
  width: 260px;
  margin-left: 9px;
`;

const TextInput = styled.div`
  width: 260px;
  height: 27px;
  line-height: 25px;
  padding-left: 11px;
  background: #fff;
  border: 1px solid #bfc4ca;
  border-radius: 4px;
  color: #444;
  font-size: 12px;
`;

const ExpSelect = styled.div`
  display: flex;
  align-items: center;
  justify-content: space-between;
  width: 206px;
  height: 32px;
  padding: 0 5px;
  background: #fff;
  border: 1px solid #dfe3ea;
  border-radius: 4px;
  color: #222;
  font-size: 11.500px;
  font-weight: 500;
`;

const ProcColumn = styled.div`
  flex: none;
  width: 910px;
  margin-top: -1px;
`;

const ProcHead = styled.div`
  display: flex;
  justify-content: space-between;
  height: 34px;
`;

const ProcName = styled.span`
  color: #111;
  font-style: italic;
  text-decoration: underline;
`;

const ProcBox = styled.div``;

const ProcHeader = styled.div`
  display: flex;
  align-items: center;
  height: 22px;
  background: ${BLUE};
  border-radius: 3px 3px 0 0;
  color: #fff;
  font-size: 12px;
  font-weight: 600;
`;

const ProcCol = styled.div<{ $w?: number }>`
  width: ${(p) => (p.$w ? `${p.$w}px` : "auto")};
  padding-left: 7px;
`;

const ProcBody = styled.div`
  position: relative;
  border-left: 1px solid #dfe3ec;
`;

const ProcRow = styled.div<{ $alt?: boolean; $selected?: boolean }>`
  display: flex;
  height: 22.400px;
  background: ${(p) => (p.$selected ? "#c1ccd8" : p.$alt ? "#f5f9fd" : "#fff")};
  border-bottom: 1px solid #dfe3ec;
  color: #1a1a1a;
  font-size: 12.700px;
`;

const ProcCell = styled.div<{ $w?: number }>`
  display: flex;
  align-items: center;
  flex: ${(p) => (p.$w ? "none" : "1")};
  width: ${(p) => (p.$w ? `${p.$w}px` : "auto")};
  padding-left: 7px;
  border-right: 1px solid #dfe3ec;
`;

const ProcTail = styled.div`
  display: flex;
  height: 4px;
  background: #fff;
`;

const ProcScroll = styled.div`
  position: absolute;
  top: 0;
  right: 0;
  bottom: 0;
  width: 10px;
  background: linear-gradient(#b9d0e4 0 29px, #d6d8da 29px);
  border-radius: 3px;
`;

const FooterGap = styled.div`
  height: 7px;
  background: #fff;
`;

const Footer = styled.div`
  height: 40px;
  padding: 14px 0 0 4px;
  line-height: 17px;
  background: #d2d6d9;
  box-shadow: inset 0 7px 0 #d2d6d9, inset 0 9px 0 #7f8588;
  color: #111;
  font-family: "Liberation Sans", Arial, sans-serif;
  font-size: 15px;
  text-align: center;
`;

const FooterLink = styled.span`
  color: #1f6fb8;
  text-decoration: underline;
`;

/* annotations drawn over the screenshot */
const RedBox = styled.div<{ $x: number; $y: number; $w: number; $h: number }>`
  position: absolute;
  left: ${(p) => p.$x}px;
  top: ${(p) => p.$y}px;
  width: ${(p) => p.$w}px;
  height: ${(p) => p.$h}px;
  border: 4px solid #c80000;
  pointer-events: none;
`;

export default App;
